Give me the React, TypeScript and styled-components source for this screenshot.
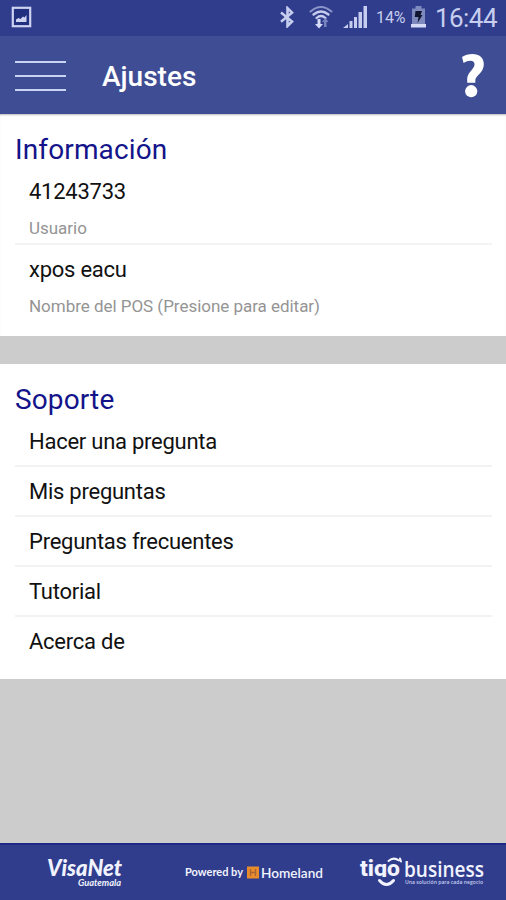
import React from 'react';
import styled, { createGlobalStyle } from 'styled-components';

const GlobalStyle = createGlobalStyle`
  * { box-sizing: border-box; }
  body { margin: 0; background: #ccc; font-family: Roboto, sans-serif; }
`;

const Screen = styled.div`
  display: flex;
  flex-direction: column;
  width: 506px;
  height: 900px;
  overflow: hidden;
  background: #cccccc;
`;

const StatusBar = styled.div`
  display: flex;
  justify-content: space-between;
  height: 36px;
  flex: none;
  padding: 0 9px 0 11px;
  background: #303d8c;
  color: #c6cdee;
`;

const StatusGroup = styled.div`
  display: flex;
  align-items: center;
`;

const Battery = styled.span`
  width: 31px;
  margin: 0 4px 0 8px;
  font-size: 16px;
  line-height: 34px;
  letter-spacing: -0.1px;
  white-space: nowrap;
`;

const Clock = styled.span`
  width: 62px;
  margin-left: 9px;
  font-size: 26px;
  line-height: 36px;
  letter-spacing: -0.55px;
  white-space: nowrap;
`;

const Header = styled.header`
  display: flex;
  align-items: center;
  height: 78px;
  flex: none;
  padding: 2px 21px 0 15px;
  background: #3f4d95;
`;

const MenuButton = styled.button`
  display: flex;
  flex-direction: column;
  gap: 12px;
  width: 51px;
  padding: 0;
  border: 0;
  background: none;
`;

const MenuLine = styled.span`
  height: 2px;
  background: #c9d3f3;
`;

const Title = styled.h1`
  flex: 1;
  margin: 2px 0 0 36px;
  color: #fff;
  font-size: 28px;
  font-weight: 500;
  line-height: 36px;
`;

const Section = styled.section<{ $height: number; $shaded?: boolean }>`
  height: ${(p) => p.$height}px;
  flex: none;
  padding: 18px 14px 0 15px;
  background: #fff;
  box-shadow: ${(p) => (p.$shaded ? 'inset 0 2px 2px -1px #b9b9bd' : 'none')};
`;

const Gap = styled.div`
  height: 28px;
  flex: none;
`;

const Heading = styled.h2`
  margin: 0;
  padding-top: 1px;
  color: #14148a;
  font-size: 28px;
  font-weight: 400;
  line-height: 33px;
  letter-spacing: 0.13px;
`;

const List = styled.ul`
  margin: 0;
  padding: 0;
  list-style: none;
`;

const Field = styled.li`
  height: 77px;
  padding: 13px 0 0 14px;

  & + & {
    padding-top: 12px;
    border-top: 2px solid #f4f4f4;
  }
`;

const Label = styled.div`
  color: #111;
  font-size: 22px;
  line-height: 26px;
  letter-spacing: -0.25px;
`;

const Caption = styled.div`
  padding-top: 13px;
  color: #949494;
  font-size: 17px;
  line-height: 20px;
  letter-spacing: -0.03px;
`;

const Option = styled.li`
  display: flex;
  align-items: center;
  height: 50px;
  padding: 2px 0 0 14px;

  &:first-child {
    height: 49px;
  }

  & + & {
    border-top: 2px solid #f2f2f2;
  }
`;

const Footer = styled.footer`
  display: flex;
  align-items: center;
  height: 57px;
  flex: none;
  margin-top: auto;
  border-top: 2px solid #1c2a85;
  background: #303d8c;
`;

const ImageIcon = () => (
  <svg width="21" height="22" viewBox="0 0 21 22">
    <rect x="1.8" y="1.8" width="17.4" height="18.4" fill="#20307f" stroke="#cdd3f1" strokeWidth="2.2" />
    <path d="M5 16v-2.500l2.500-1.500 2 1L12 10.500l1.500 1L15.500 9v7z" fill="#cdd3f1" />
  </svg>
);

const BluetoothIcon = () => (
  <svg width="16" height="22" viewBox="0 0 16 22">
    <path d="M2 6.500l11 9-4.500 4.500V2.200L13 6.700l-11 9" fill="none" stroke="#c6cdee" strokeWidth="2.600" />
  </svg>
);

const WifiIcon = () => (
  <svg width="24" height="25" viewBox="0 0 24 25">
    <g fill="none" strokeLinecap="round">
      <path d="M1.500 6.500Q12-2.500 22.500 6.500" stroke="#8b95c9" strokeWidth="2" />
      <path d="M4.500 9.500Q12 3.500 19.500 9.500" stroke="#c6cdee" strokeWidth="2.300" />
      <path d="M7.500 13Q12 9 16.500 13" stroke="#c6cdee" strokeWidth="2.300" />
    </g>
    <path d="M8.500 14h3v5h2.500l-4 4.500L6 19h2.500z" fill="#d5dbf7" />
    <path d="M15 22v-5h-2l3.500-4 3 4h-2v5z" fill="#7985be" />
  </svg>
);

const SignalIcon = () => (
  <svg width="25" height="24" viewBox="0 0 25 24">
    <g fill="#c6cdee">
      <path d="M0 23l5-4v4z" />
      <rect x="6.500" y="16" width="3" height="7" />
      <rect x="11" y="12" width="3" height="11" />
      <rect x="15.500" y="7" width="3.500" height="16" />
      <rect x="20.500" y="1" width="3.500" height="22" />
    </g>
  </svg>
);

const BatteryIcon = () => (
  <svg width="15" height="22" viewBox="0 0 15 22">
    <path d="M4.500 0h6v2.500H14V21H1V2.500h3.500z" fill="#7e89be" />
    <rect x="0" y="18" width="15" height="3.500" fill="#d5dbf7" />
    <path d="M4.500 5H11l-1.500 4h2l-5 8 1-6H3.800z" fill="#11152f" />
  </svg>
);

const HelpIcon = () => (
  <svg width="24" height="46" viewBox="0 0 24 46">
    <path
      d="M1 4C4 2 7.400.9 11.300.9c7.300 0 11.500 3.900 11.500 10.100 0 5.700-3.400 8.900-5.900 11.500-2 2-2.600 3.400-2.600 5.600v1.600H6.200v-2.600c0-4.700 1.700-7 4.100-9.700 2-2.300 3.200-3.700 3.200-6.100 0-2.300-1.400-3.600-4-3.600-2.500 0-4.300.9-6.900 2.300z"
      fill="#fff"
    />
    <circle cx="10.200" cy="38.200" r="6.100" fill="#fff" />
  </svg>
);

const Logos = () => (
  <svg width="506" height="55" viewBox="0 845 506 55" fill="#f1f3ff">
    <clipPath id="tigo-body">
      <rect x="355" y="850" width="50" height="27" />
    </clipPath>
    <text x="47" y="875.500" fontFamily="Lato" fontSize="23.500" fontWeight="900" fontStyle="italic" textLength="75" lengthAdjust="spacingAndGlyphs">VisaNet</text>
    <text x="78" y="886" fontFamily="Lato" fontSize="9" fontWeight="700" fontStyle="italic" textLength="43" lengthAdjust="spacingAndGlyphs">Guatemala</text>
    <text x="185" y="876" fontFamily="Lato" fontSize="10.500" fontWeight="700" textLength="58" lengthAdjust="spacingAndGlyphs">Powered by</text>
    <rect x="247" y="866.500" width="12" height="12" fill="#e78b2c" />
    <path d="M250.500 869v7M255.500 869v7M250.500 872.500h5" stroke="#a76535" strokeWidth="1.300" />
    <text x="261" y="877.500" fontFamily="Lato" fontSize="14" fontWeight="600" textLength="62" lengthAdjust="spacingAndGlyphs">Homeland</text>
    <g clipPath="url(#tigo-body)">
      <text x="360" y="876" fontFamily="Roboto" fontSize="21.500" fontWeight="800" textLength="40" lengthAdjust="spacingAndGlyphs">tigo</text>
    </g>
    <path d="M388.500 861Q393.500 856.500 399 860.500M400 858.500l1 3" fill="none" stroke="#f1f3ff" strokeWidth="2" strokeLinecap="round" />
    <path d="M379.500 880.500Q386.500 888.500 393.500 880.500" fill="none" stroke="#f1f3ff" strokeWidth="3" strokeLinecap="round" />
    <text x="404" y="876.500" fontFamily="Open Sans" fontSize="22" fontWeight="600" textLength="80" lengthAdjust="spacingAndGlyphs">business</text>
    <text x="405" y="884" fontFamily="Open Sans" fontSize="6" fontWeight="600" fill="#c6cdee" textLength="78" lengthAdjust="spacingAndGlyphs">Una solución para cada negocio</text>
  </svg>
);

const IconSlot = styled.span<{ $left?: number; $right?: number }>`
  display: flex;
  margin: 0 ${(p) => p.$right ?? 0}px 2px ${(p) => p.$left ?? 0}px;
`;

const options = [
  'Hacer una pregunta',
  'Mis preguntas',
  'Preguntas frecuentes',
  'Tutorial',
  'Acerca de',
];

export default function App() {
  return (
    <Screen>
      <GlobalStyle />
      <StatusBar>
        <StatusGroup>
          <IconSlot><ImageIcon /></IconSlot>
        </StatusGroup>
        <StatusGroup>
          <IconSlot><BluetoothIcon /></IconSlot>
          <IconSlot $left={14}><WifiIcon /></IconSlot>
          <IconSlot $left={10}><SignalIcon /></IconSlot>
          <Battery>14%</Battery>
          <IconSlot><BatteryIcon /></IconSlot>
          <Clock>16:44</Clock>
        </StatusGroup>
      </StatusBar>
      <Header>
        <MenuButton aria-label="Menú">
          <MenuLine />
          <MenuLine />
          <MenuLine />
        </MenuButton>
        <Title>Ajustes</Title>
        <HelpIcon />
      </Header>
      <Section $height={222} $shaded>
        <Heading>Información</Heading>
        <List>
          <Field>
            <Label>41243733</Label>
            <Caption>Usuario</Caption>
          </Field>
          <Field>
            <Label>xpos eacu</Label>
            <Caption>Nombre del POS (Presione para editar)</Caption>
          </Field>
        </List>
      </Section>
      <Gap />
      <Section $height={315}>
        <Heading>Soporte</Heading>
        <List>
          {options.map((name) => (
            <Option key={name}>
              <Label>{name}</Label>
            </Option>
          ))}
        </List>
      </Section>
      <Footer>
        <Logos />
      </Footer>
    </Screen>
  );
}
